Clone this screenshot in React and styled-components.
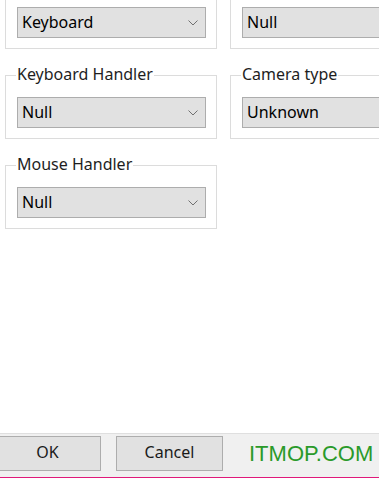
import React from 'react';
import styled, { createGlobalStyle } from 'styled-components';

const GlobalStyle = createGlobalStyle`
  html, body {
    margin: 0;
    padding: 0;
    background: #ffffff;
    overflow: hidden;
  }
  body {
    font-family: "Noto Sans", "Noto Sans CJK SC", sans-serif;
    font-size: 16px;
    color: #1a1a1a;
  }
`;

const Window = styled.div`
  width: 379px;
  height: 479px;
  display: flex;
  flex-direction: column;
  overflow: hidden;
  background: #ffffff;
`;

const Form = styled.div`
  flex: 1;
  display: grid;
  grid-template-columns: 212px 212px;
  grid-auto-rows: min-content;
  column-gap: 13px;
  row-gap: 16px;
  padding-left: 5px;
  margin-top: -15px;
`;

const Group = styled.fieldset`
  margin: 0;
  min-width: 0;
  border: 1px solid #dcdcdc;
  padding: ${p => (p.$legend ? '12px' : '21px')} 10px 10px 11px;
`;

const Legend = styled.legend`
  margin-left: -1px;
  padding: 0 1px 2px;
  font-size: 16px;
  line-height: 18px;
  color: #1e1e1e;
`;

const Combo = styled.div`
  box-sizing: border-box;
  height: 31px;
  width: ${p => p.$wide ? '240px' : '189px'};
  border: 1px solid #adadad;
  background: #e1e1e1;
  display: flex;
  align-items: center;
  justify-content: space-between;
  padding: 0 7px 0 4px;
  font-size: 16px;
  line-height: 29px;
  color: #000000;
`;

const Chevron = styled.svg`
  width: 10px;
  height: 6px;
  flex: none;
`;

const Footer = styled.div`
  height: 45px;
  border-top: 1px solid #dfdfdf;
  border-bottom: 1px solid #e0197a;
  margin-bottom: 1px;
  background: #f0f0f0;
  display: flex;
  align-items: flex-start;
  padding-top: 2px;
  box-sizing: border-box;
`;

const Button = styled.button`
  box-sizing: border-box;
  width: 107px;
  height: 35px;
  flex: none;
  margin: 0;
  margin-left: ${p => p.$first ? '-6px' : '15px'};
  border: 1px solid #adadad;
  background: #e1e1e1;
  font-family: inherit;
  font-size: 16px;
  line-height: 31px;
  color: #1a1a1a;
  padding: 0 0 2px;
`;

const Brand = styled.div`
  margin-left: 26px;
  height: 35px;
  display: flex;
  align-items: center;
  font-family: "Liberation Sans", Arial, sans-serif;
  font-size: 22px;
  color: #2a9a2a;
  white-space: nowrap;
`;

function Select({ value, wide }) {
  return (
    <Combo $wide={wide}>
      <span>{value}</span>
      <Chevron viewBox="0 0 10 6">
        <polyline points="0.5,0.5 5,5 9.5,0.5" fill="none" stroke="#707070" strokeWidth="1" />
      </Chevron>
    </Combo>
  );
}

const groups = [
  { legend: null, value: 'Keyboard' },
  { legend: null, value: 'Null', wide: true },
  { legend: 'Keyboard Handler', value: 'Null' },
  { legend: 'Camera type', value: 'Unknown', wide: true },
  { legend: 'Mouse Handler', value: 'Null' },
];

export default function App() {
  return (
    <Window>
      <GlobalStyle />
      <Form>
        {groups.map((g, i) => (
          <Group key={i} $legend={!!g.legend}>
            {g.legend && <Legend>{g.legend}</Legend>}
            <Select value={g.value} wide={g.wide} />
          </Group>
        ))}
      </Form>
      <Footer>
        <Button $first>OK</Button>
        <Button>Cancel</Button>
        <Brand>ITMOP.COM</Brand>
      </Footer>
    </Window>
  );
}
